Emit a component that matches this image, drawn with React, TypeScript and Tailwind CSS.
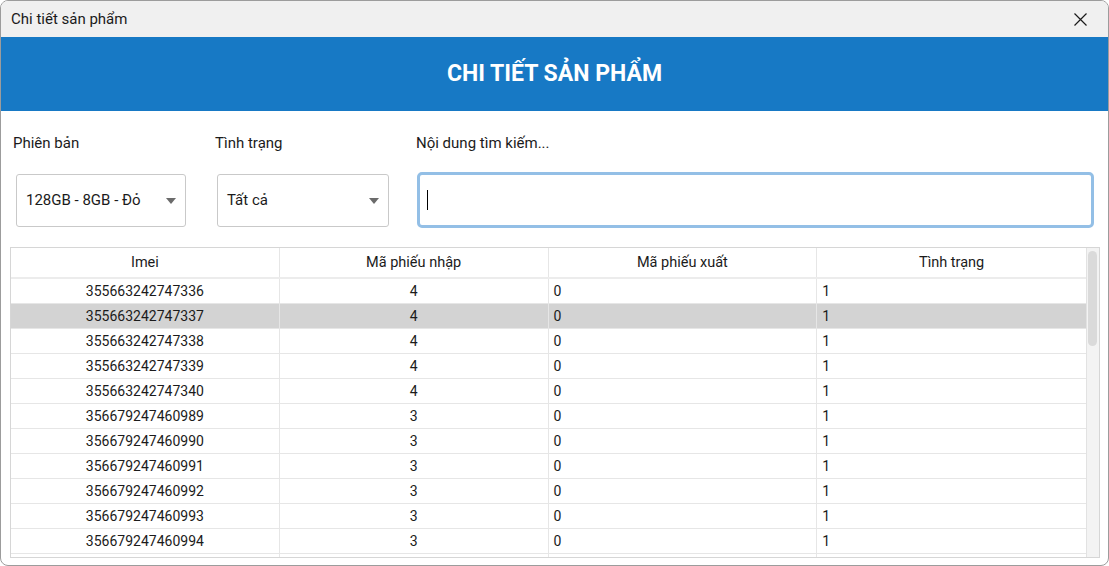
import { useState } from "react";

type Item = {
    imei: string;
    maNhap: number;
    maXuat: number;
    tinhTrang: number;
};

const items: Item[] = [
    { imei: "355663242747336", maNhap: 4, maXuat: 0, tinhTrang: 1 },
    { imei: "355663242747337", maNhap: 4, maXuat: 0, tinhTrang: 1 },
    { imei: "355663242747338", maNhap: 4, maXuat: 0, tinhTrang: 1 },
    { imei: "355663242747339", maNhap: 4, maXuat: 0, tinhTrang: 1 },
    { imei: "355663242747340", maNhap: 4, maXuat: 0, tinhTrang: 1 },
    { imei: "356679247460989", maNhap: 3, maXuat: 0, tinhTrang: 1 },
    { imei: "356679247460990", maNhap: 3, maXuat: 0, tinhTrang: 1 },
    { imei: "356679247460991", maNhap: 3, maXuat: 0, tinhTrang: 1 },
    { imei: "356679247460992", maNhap: 3, maXuat: 0, tinhTrang: 1 },
    { imei: "356679247460993", maNhap: 3, maXuat: 0, tinhTrang: 1 },
    { imei: "356679247460994", maNhap: 3, maXuat: 0, tinhTrang: 1 },
];

const ComboBox = ({ value, width }: { value: string; width: string }) => (
    <div
        className={`${width} h-[53px] flex items-center justify-between pl-[9px] pr-[9px] bg-white border border-[#c9c9c9] rounded-[3px] text-[15px] text-[#1b1b1b]`}
    >
        <span>{value}</span>
        <svg width="10" height="6" viewBox="0 0 10 6">
            <path d="M0 0 H10 L5 6 Z" fill="#6b6b6b" />
        </svg>
    </div>
);

const App = () => {
    const [selected, setSelected] = useState(1);

    return (
        <div
            className="w-[1109px] h-[566px] bg-white border border-[#9c9c9c] rounded-[8px] overflow-hidden flex flex-col"
            style={{ fontFamily: "Roboto, 'Noto Sans', sans-serif" }}
        >
            {/* title bar */}
            <div className="h-[36px] shrink-0 bg-[#f0f0f0] flex items-center justify-between pl-[10px] pr-[21px]">
                <span className="text-[15px] text-[#1a1a1a]">Chi tiết sản phẩm</span>
                <svg width="13" height="13" viewBox="0 0 13 13">
                    <path d="M0.5 0.5 L12.5 12.5 M12.5 0.5 L0.5 12.5" stroke="#1a1a1a" strokeWidth="1.2" />
                </svg>
            </div>

            {/* heading */}
            <div className="h-[74px] shrink-0 bg-[#1779c5] flex items-center justify-center">
                <h1 className="text-white text-[23px] font-bold">CHI TIẾT SẢN PHẨM</h1>
            </div>

            {/* filters */}
            <div className="flex pt-[22px] pl-[12px] h-[136px] shrink-0 text-[15px] text-[#1b1b1b]">
                <div className="w-[202px] flex flex-col">
                    <span className="h-[20px] leading-[20px]">Phiên bản</span>
                    <div className="mt-[21px] ml-[3px]">
                        <ComboBox value="128GB - 8GB - Đỏ" width="w-[170px]" />
                    </div>
                </div>
                <div className="w-[201px] flex flex-col">
                    <span className="h-[20px] leading-[20px]">Tình trạng</span>
                    <div className="mt-[21px] ml-[2px]">
                        <ComboBox value="Tất cả" width="w-[172px]" />
                    </div>
                </div>
                <div className="flex flex-col">
                    <span className="h-[20px] leading-[20px]">Nội dung tìm kiếm...</span>
                    <div className="mt-[19px] ml-[1px] w-[677px] h-[56px] border-[3px] border-[#93bfe6] rounded-[5px] flex items-center pl-[7px]">
                        <span className="w-px h-[20px] bg-black" />
                    </div>
                </div>
            </div>

            {/* table */}
            <div className="ml-[9px] w-[1090px] h-[311px] border border-[#d6d6d6] flex overflow-hidden text-[14px] text-[#1b1b1b]">
                <div className="flex-1 flex flex-col">
                    <div className="h-[31px] shrink-0 grid grid-cols-4 border-b-2 border-[#ececec] text-[14.5px]">
                        {["Imei", "Mã phiếu nhập", "Mã phiếu xuất", "Tình trạng"].map((h, i) => (
                            <div
                                key={h}
                                className={`flex items-center justify-center ${i < 3 ? "border-r border-[#e6e6e6]" : ""}`}
                            >
                                {h}
                            </div>
                        ))}
                    </div>
                    {items.map((it, i) => (
                        <div
                            key={it.imei}
                            onClick={() => setSelected(i)}
                            className={`h-[25px] shrink-0 grid grid-cols-4 border-b border-[#e6e6e6] ${
                                selected === i ? "bg-[#d3d3d3]" : ""
                            }`}
                        >
                            <div className="flex items-center justify-center border-r border-[#e6e6e6]">{it.imei}</div>
                            <div className="flex items-center justify-center border-r border-[#e6e6e6]">{it.maNhap}</div>
                            <div className="flex items-center pl-[5px] border-r border-[#e6e6e6]">{it.maXuat}</div>
                            <div className="flex items-center pl-[5px]">{it.tinhTrang}</div>
                        </div>
                    ))}
                    <div className="h-[25px] shrink-0 grid grid-cols-4">
                        <div className="border-r border-[#e6e6e6]" />
                        <div className="border-r border-[#e6e6e6]" />
                        <div className="border-r border-[#e6e6e6]" />
                        <div />
                    </div>
                </div>
                {/* scrollbar */}
                <div className="w-[13px] shrink-0 bg-[#f3f3f3] border-l border-[#e2e2e2] pt-[3px] pl-[1px]">
                    <div className="w-[9px] h-[95px] rounded-full bg-[#dadada]" />
                </div>
            </div>
        </div>
    );
};

export default App;
